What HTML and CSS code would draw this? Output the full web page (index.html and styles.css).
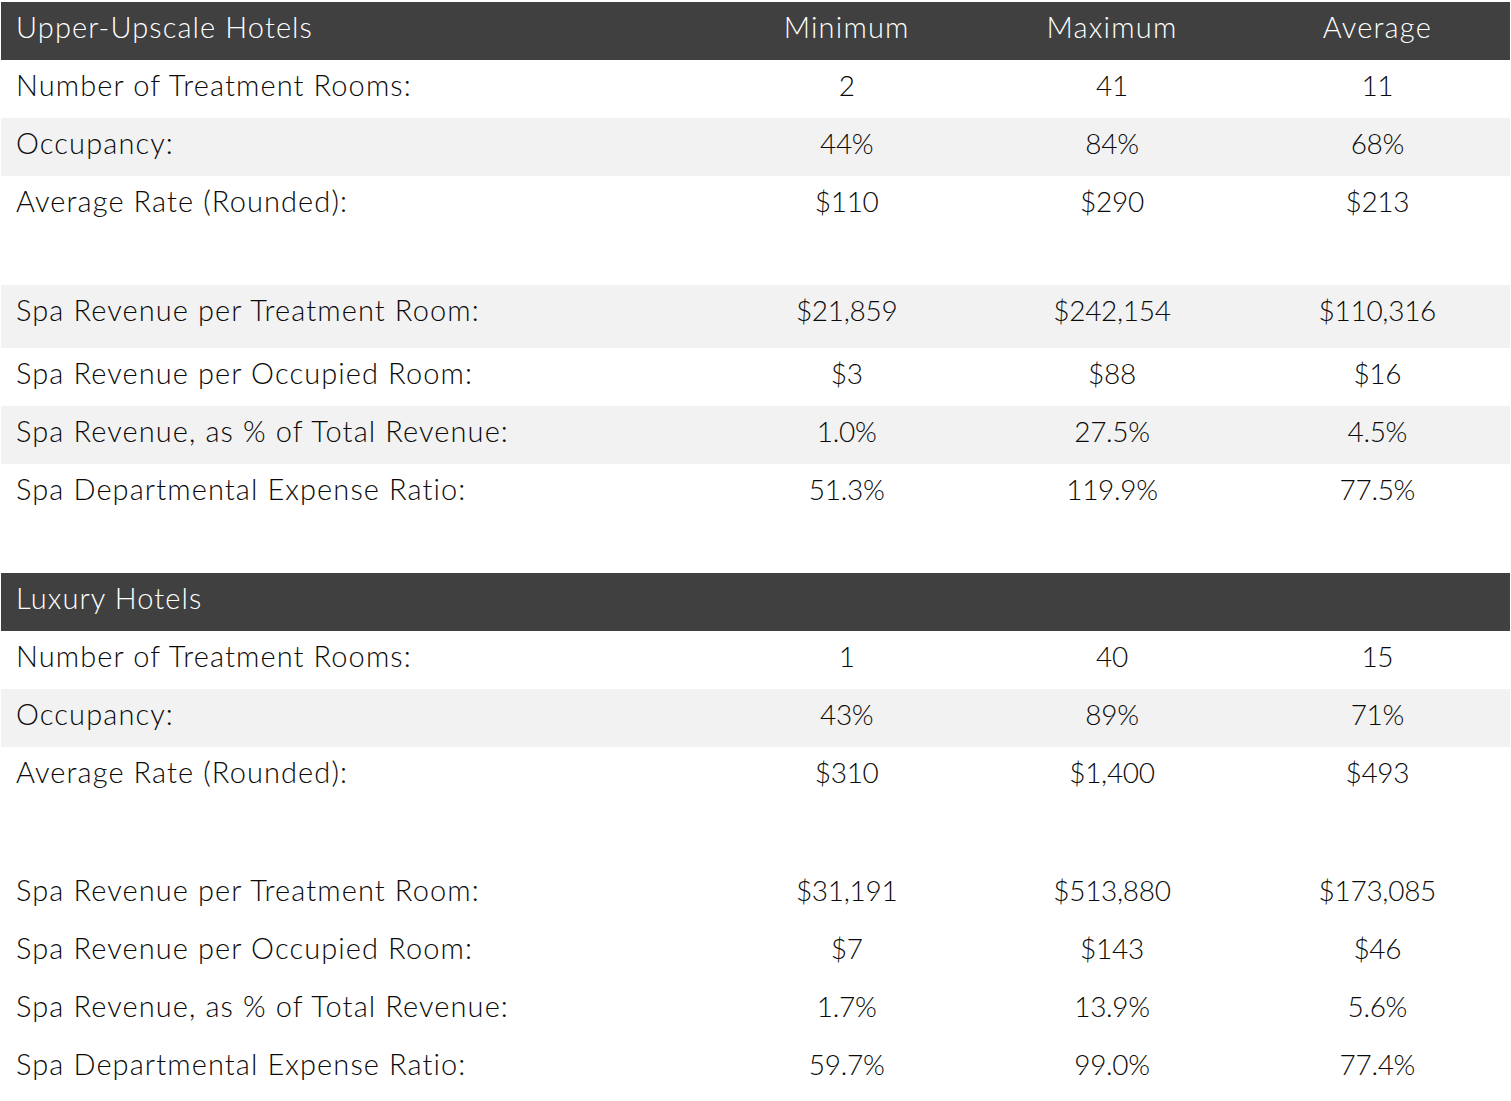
FILE: index.html
```html
<!DOCTYPE html>
<html>
<head>
<meta charset="utf-8">
<link rel="stylesheet" href="styles.css">
</head>
<body>
<table class="stats">
  <colgroup>
    <col class="c-label"><col class="c-val"><col class="c-val"><col class="c-val">
  </colgroup>
  <tbody>
    <tr class="head"><td class="label">Upper-Upscale Hotels</td><td class="colhead">Minimum</td><td class="colhead">Maximum</td><td class="colhead">Average</td></tr>
    <tr><td class="label">Number of Treatment Rooms:</td><td>2</td><td>41</td><td>11</td></tr>
    <tr class="stripe"><td class="label">Occupancy:</td><td>44%</td><td>84%</td><td>68%</td></tr>
    <tr><td class="label">Average Rate (Rounded):</td><td>$110</td><td>$290</td><td>$213</td></tr>
    <tr class="spacer"><td colspan="4"></td></tr>
    <tr class="stripe tall"><td class="label">Spa Revenue per Treatment Room:</td><td>$21,859</td><td>$242,154</td><td>$110,316</td></tr>
    <tr><td class="label">Spa Revenue per Occupied Room:</td><td>$3</td><td>$88</td><td>$16</td></tr>
    <tr class="stripe"><td class="label">Spa Revenue, as % of Total Revenue:</td><td>1.0%</td><td>27.5%</td><td>4.5%</td></tr>
    <tr><td class="label">Spa Departmental Expense Ratio:</td><td>51.3%</td><td>119.9%</td><td>77.5%</td></tr>
    <tr class="spacer"><td colspan="4"></td></tr>
    <tr class="head"><td class="label">Luxury Hotels</td><td></td><td></td><td></td></tr>
    <tr><td class="label">Number of Treatment Rooms:</td><td>1</td><td>40</td><td>15</td></tr>
    <tr class="stripe"><td class="label">Occupancy:</td><td>43%</td><td>89%</td><td>71%</td></tr>
    <tr><td class="label">Average Rate (Rounded):</td><td>$310</td><td>$1,400</td><td>$493</td></tr>
    <tr class="spacer wide"><td colspan="4"></td></tr>
    <tr><td class="label">Spa Revenue per Treatment Room:</td><td>$31,191</td><td>$513,880</td><td>$173,085</td></tr>
    <tr><td class="label">Spa Revenue per Occupied Room:</td><td>$7</td><td>$143</td><td>$46</td></tr>
    <tr><td class="label">Spa Revenue, as % of Total Revenue:</td><td>1.7%</td><td>13.9%</td><td>5.6%</td></tr>
    <tr><td class="label">Spa Departmental Expense Ratio:</td><td>59.7%</td><td>99.0%</td><td>77.4%</td></tr>
  </tbody>
</table>
</body>
</html>
```
FILE: styles.css
```css
html, body {
  background: #ffffff;
}
body {
  margin: 2px 1px 0 1px;
  font-family: Lato, "Open Sans", "Liberation Sans", sans-serif;
  color: #0a0a0a;
}
.stats {
  width: 1509px;
  border-collapse: collapse;
  border-spacing: 0;
  table-layout: fixed;
}
.c-label { width: 713px; }
.c-val { width: 265.33px; }
.stats td {
  height: 58px;
  padding: 10px 0 0 0;
  vertical-align: top;
  text-align: center;
  font-size: 28px;
  line-height: 30px;
  font-weight: 300;
  letter-spacing: -0.3px;
  box-sizing: border-box;
}
.stats td.label {
  text-align: left;
  padding-left: 15px;
  font-size: 29px;
  letter-spacing: 1.1px;
}
.stats td.colhead {
  font-size: 29px;
  letter-spacing: 1.2px;
}
.stats tr.head td {
  background: #404040;
  color: #ffffff;
}
.stats tr.stripe td {
  background: #f2f2f2;
}
.stats tr.tall td {
  height: 63px;
}
.stats tr.spacer td {
  height: 51px;
  padding: 0;
}
.stats tr.spacer.wide td {
  height: 60px;
}
```
